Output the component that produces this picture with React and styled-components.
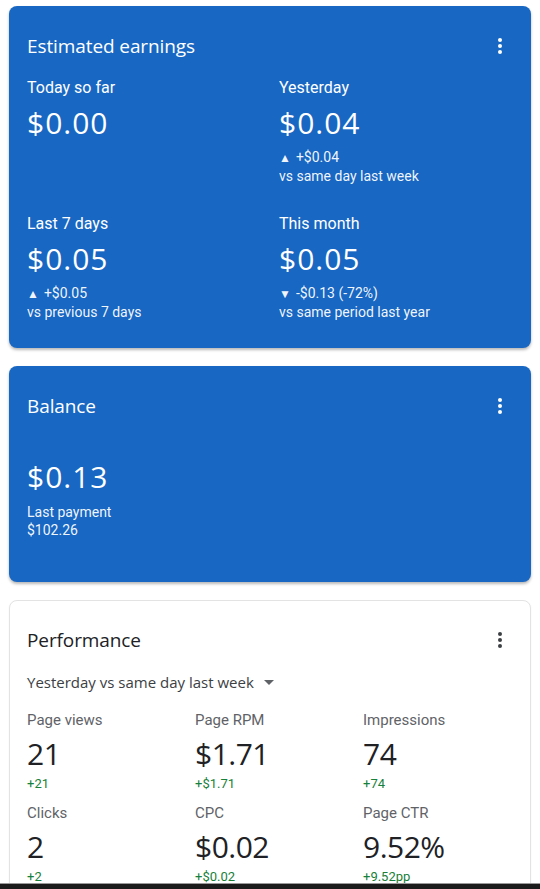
import React from "react";
import styled, { createGlobalStyle } from "styled-components";

const Global = createGlobalStyle`
  html, body { margin: 0; padding: 0; background: #ffffff; }
  body { font-family: Roboto, "Liberation Sans", sans-serif; }
`;

const Page = styled.div`
  height: 889px;
  display: flex;
  flex-direction: column;
  overflow: hidden;
  background: #ffffff;
`;

const Scroll = styled.div`
  flex: 1;
  overflow: hidden;
  padding: 6px 9px 0 9px;
  display: flex;
  flex-direction: column;
  gap: 18px;
`;

const NavBar = styled.div`
  height: 5px;
  flex: none;
  background: #1b1b1b;
  border-top: 1px solid #9a9a9a;
`;

const Card = styled.section`
  flex: none;
  border-radius: 8px;
  padding: ${(p) => p.$pad || "28px 18px"};
  background: ${(p) => (p.$light ? "#ffffff" : "#1867c3")};
  color: ${(p) => (p.$light ? "#202124" : "#ffffff")};
  border: ${(p) => (p.$light ? "1px solid #e3e3e3" : "none")};
  box-shadow: ${(p) =>
    p.$light ? "0 1px 2px rgba(0,0,0,0.06)" : "0 2px 3px rgba(0,0,0,0.28)"};
`;

const Header = styled.div`
  display: flex;
  align-items: center;
  justify-content: space-between;
  height: 24px;
`;

const Title = styled.h2`
  margin: 0;
  font-family: "Open Sans", Roboto, sans-serif;
  font-weight: 400;
  font-size: 19px;
  line-height: 24px;
  letter-spacing: -0.1px;
`;

const Dots = styled.div`
  display: flex;
  flex-direction: column;
  gap: 2px;
  margin-right: 11px;
  & span {
    width: 4px;
    height: 4px;
    border-radius: 50%;
    background: ${(p) => (p.$dark ? "#3c4043" : "#ffffff")};
  }
`;

const MoreDots = ({ dark }) => (
  <Dots $dark={dark}>
    <span />
    <span />
    <span />
  </Dots>
);

const StatGrid = styled.div`
  display: grid;
  grid-template-columns: 252px 1fr;
  row-gap: 29px;
  margin-top: 20px;
`;

const Stat = styled.div`
  display: flex;
  flex-direction: column;
`;

const Label = styled.div`
  font-size: ${(p) => p.$size || "16px"};
  line-height: 20px;
  color: ${(p) => p.$color || "inherit"};
`;

const Amount = styled.div`
  font-family: "Open Sans", Roboto, sans-serif;
  font-size: 30px;
  line-height: 36px;
  letter-spacing: ${(p) => p.$ls || "1px"};
  margin-top: ${(p) => p.$mt || "7px"};
  color: ${(p) => p.$color || "inherit"};
`;

const Small = styled.div`
  font-size: ${(p) => p.$size || "14px"};
  line-height: 18px;
  margin-top: ${(p) => p.$mt || "0"};
  color: ${(p) => p.$color || "rgba(255,255,255,0.95)"};
`;

const Tri = styled.span`
  font-size: 12px;
  margin-right: 5px;
`;

const Spacer = styled.div`
  height: ${(p) => p.$h}px;
`;

const Selector = styled.div`
  margin-top: 20px;
  font-family: "Open Sans", Roboto, sans-serif;
  font-size: 15px;
  line-height: 20px;
  color: #3c4043;
  display: flex;
  align-items: center;
  gap: 10px;
`;

const Caret = styled.span`
  width: 0;
  height: 0;
  border-left: 5px solid transparent;
  border-right: 5px solid transparent;
  border-top: 5px solid #5f6368;
`;

const MetricGrid = styled.div`
  display: grid;
  grid-template-columns: 168px 168px 1fr;
  row-gap: 10px;
  margin-top: 18px;
`;

const Metric = styled.div`
  display: flex;
  flex-direction: column;
`;

const earnings = [
  { label: "Today so far", value: "$0.00" },
  { label: "Yesterday", value: "$0.04", up: true, delta: "+$0.04", note: "vs same day last week" },
  { label: "Last 7 days", value: "$0.05", up: true, delta: "+$0.05", note: "vs previous 7 days" },
  { label: "This month", value: "$0.05", up: false, delta: "-$0.13 (-72%)", note: "vs same period last year" },
];

const metrics = [
  { label: "Page views", value: "21", delta: "+21" },
  { label: "Page RPM", value: "$1.71", delta: "+$1.71" },
  { label: "Impressions", value: "74", delta: "+74" },
  { label: "Clicks", value: "2", delta: "+2" },
  { label: "CPC", value: "$0.02", delta: "+$0.02" },
  { label: "Page CTR", value: "9.52%", delta: "+9.52pp" },
];

export default function App() {
  return (
    <Page>
      <Global />
      <Scroll>
        <Card $pad="28px 18px 27px 18px">
          <Header>
            <Title>Estimated earnings</Title>
            <MoreDots />
          </Header>
          <StatGrid>
            {earnings.map((e) => (
              <Stat key={e.label}>
                <Label>{e.label}</Label>
                <Amount>{e.value}</Amount>
                {e.delta && (
                  <>
                    <Small $mt="7px">
                      <Tri>{e.up ? "▲" : "▼"}</Tri>
                      {e.delta}
                    </Small>
                    <Small>{e.note}</Small>
                  </>
                )}
              </Stat>
            ))}
          </StatGrid>
        </Card>

        <Card $pad="28px 18px 43px 18px">
          <Header>
            <Title>Balance</Title>
            <MoreDots />
          </Header>
          <Spacer $h={41} />
          <Amount $mt="0">$0.13</Amount>
          <Small $mt="8px">Last payment</Small>
          <Small>$102.26</Small>
        </Card>

        <Card $light $pad="27px 17px 28px 17px">
          <Header>
            <Title>Performance</Title>
            <MoreDots dark />
          </Header>
          <Selector>
            Yesterday vs same day last week
            <Caret />
          </Selector>
          <MetricGrid>
            {metrics.map((m) => (
              <Metric key={m.label}>
                <Label $size="15px" $color="#5f6368">{m.label}</Label>
                <Amount $mt="6px" $ls="-0.5px" $color="#202124">{m.value}</Amount>
                <Small $mt="3px" $size="13px" $color="#188038">{m.delta}</Small>
              </Metric>
            ))}
          </MetricGrid>
        </Card>
      </Scroll>
      <NavBar />
    </Page>
  );
}
